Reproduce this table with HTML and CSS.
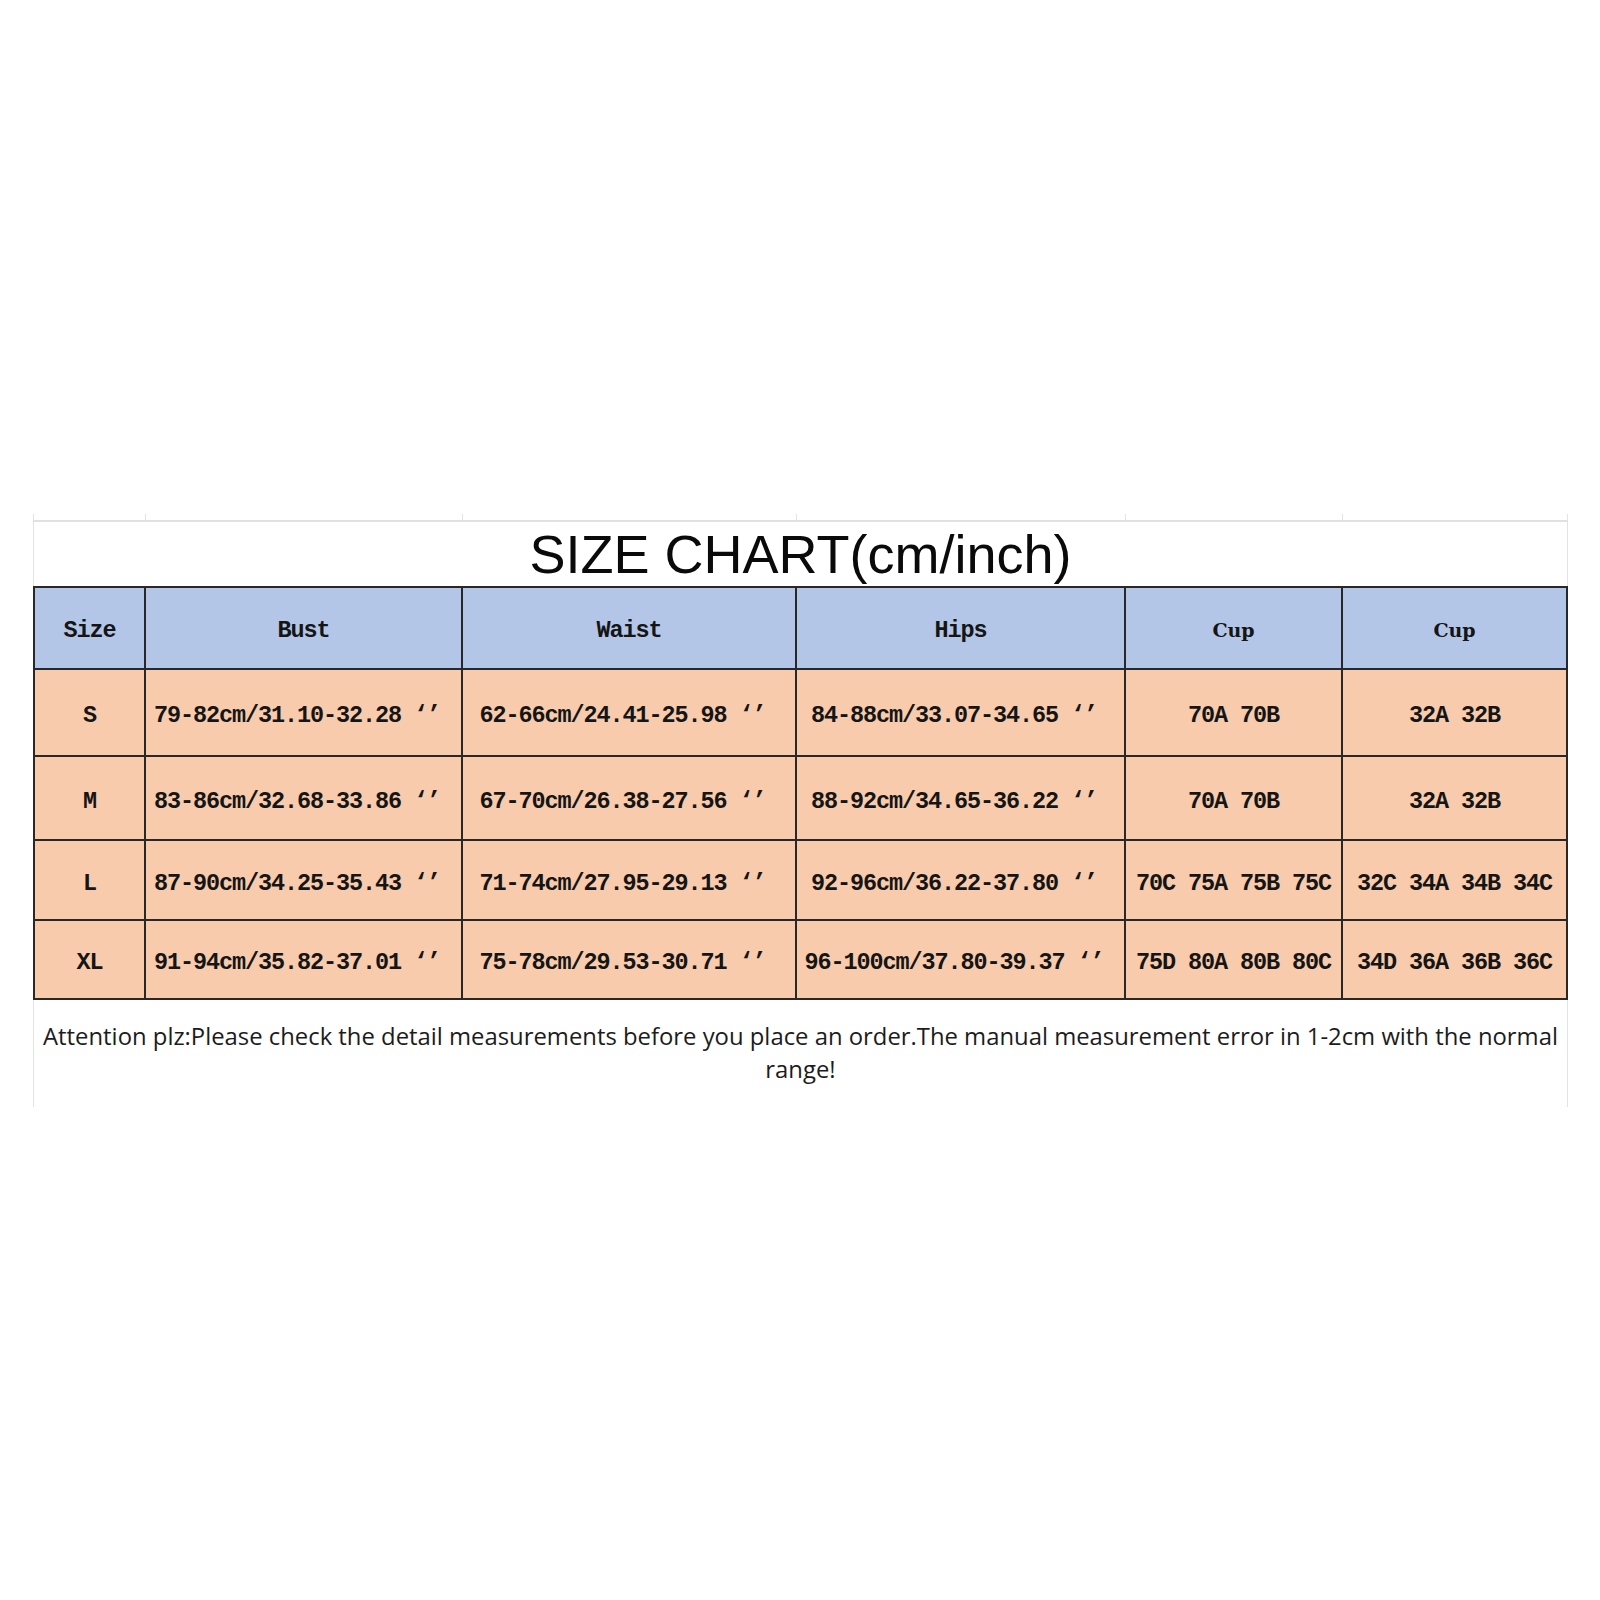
FILE: index.html
```html
<!DOCTYPE html>
<html lang="en">
<head>
<meta charset="utf-8">
<title>Size Chart</title>
<link rel="stylesheet" href="styles.css">
</head>
<body>
<div class="sheet">
  <div class="ticks"><span></span><span></span><span></span><span></span><span></span><span></span></div>
  <div class="body">
    <div class="title-row"><h1 class="title">SIZE CHART(cm/inch)</h1></div>
    <div class="chart">
      <div class="cell head mono">Size</div>
      <div class="cell head mono">Bust</div>
      <div class="cell head mono">Waist</div>
      <div class="cell head mono">Hips</div>
      <div class="cell head serif">Cup</div>
      <div class="cell head serif">Cup</div>

      <div class="cell mono">S</div>
      <div class="cell mono meas">79-82cm/31.10-32.28 ‘’</div>
      <div class="cell mono meas">62-66cm/24.41-25.98 ‘’</div>
      <div class="cell mono meas">84-88cm/33.07-34.65 ‘’</div>
      <div class="cell mono">70A 70B</div>
      <div class="cell mono">32A 32B</div>

      <div class="cell mono">M</div>
      <div class="cell mono meas">83-86cm/32.68-33.86 ‘’</div>
      <div class="cell mono meas">67-70cm/26.38-27.56 ‘’</div>
      <div class="cell mono meas">88-92cm/34.65-36.22 ‘’</div>
      <div class="cell mono">70A 70B</div>
      <div class="cell mono">32A 32B</div>

      <div class="cell mono">L</div>
      <div class="cell mono meas">87-90cm/34.25-35.43 ‘’</div>
      <div class="cell mono meas">71-74cm/27.95-29.13 ‘’</div>
      <div class="cell mono meas">92-96cm/36.22-37.80 ‘’</div>
      <div class="cell mono">70C 75A 75B 75C</div>
      <div class="cell mono">32C 34A 34B 34C</div>

      <div class="cell mono">XL</div>
      <div class="cell mono meas">91-94cm/35.82-37.01 ‘’</div>
      <div class="cell mono meas">75-78cm/29.53-30.71 ‘’</div>
      <div class="cell mono meas">96-100cm/37.80-39.37 ‘’</div>
      <div class="cell mono">75D 80A 80B 80C</div>
      <div class="cell mono">34D 36A 36B 36C</div>
    </div>
    <p class="note">Attention plz:Please check the detail measurements before you place an order.The manual measurement error in 1-2cm with the normal range!</p>
  </div>
</div>
</body>
</html>
```

FILE: styles.css
```css
html, body {
  margin: 0;
  padding: 0;
  background: #ffffff;
}

.sheet {
  width: 1535px;
  margin: 514px 0 0 33px;
}

.ticks {
  display: grid;
  grid-template-columns: 112px 317px 334px 329px 217px 1fr;
  height: 6px;
  border-bottom: 2px solid #e1e1e5;
}

.ticks span {
  border-left: 1px solid #e4e4e8;
}

.ticks span:last-child {
  border-right: 1px solid #e4e4e8;
}

.body {
  background:
    linear-gradient(#e2e3ea, #e2e3ea) left top / 1px 100% no-repeat,
    linear-gradient(#e2e3ea, #e2e3ea) right top / 1px 100% no-repeat;
}

.title-row {
  height: 64px;
  display: flex;
  justify-content: center;
}

.title {
  margin: 0;
  font-family: "Liberation Sans", Arial, sans-serif;
  font-weight: 400;
  font-size: 54px;
  line-height: 64px;
  color: #0a0a0a;
  white-space: nowrap;
}

.chart {
  display: grid;
  grid-template-columns: 109px 315px 332px 327px 215px 223px;
  grid-template-rows: 80px 85px 82px 78px 77px;
  gap: 2px;
  padding: 2px;
  background: #282828;
}

.cell {
  background: #f8cbad;
  display: flex;
  align-items: center;
  justify-content: center;
  white-space: nowrap;
  color: #151515;
  padding-top: 6px;
}

.cell.head {
  background: #b4c6e7;
  padding-top: 4px;
}

.mono {
  font-family: "Liberation Mono", "Courier New", monospace;
  font-weight: 700;
  font-size: 23.5px;
  letter-spacing: -1.1px;
}

.serif {
  font-family: "DejaVu Serif", serif;
  font-weight: 700;
  font-size: 19px;
}

.meas {
  padding-right: 13px;
}

.note {
  margin: 0;
  padding: 20px 4px 21px;
  font-family: "Open Sans", "Noto Sans", sans-serif;
  font-size: 23.85px;
  line-height: 33px;
  color: #1c1c1c;
  text-align: center;
}
```
